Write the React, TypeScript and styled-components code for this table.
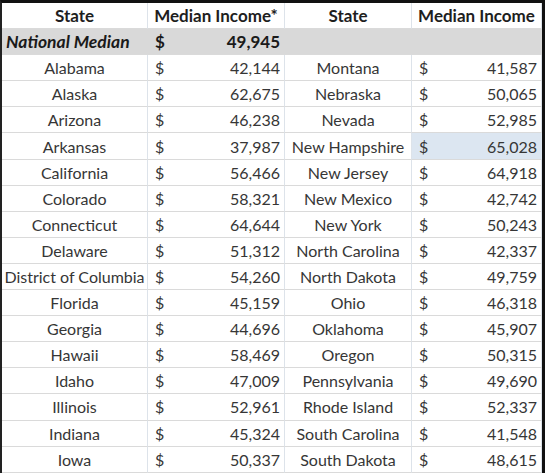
import React from "react";
import styled, { createGlobalStyle } from "styled-components";

const Global = createGlobalStyle`
  html, body { margin: 0; padding: 0; background: #ffffff; }
  body { font-family: Lato, "Open Sans", "Liberation Sans", sans-serif; }
`;

const Sheet = styled.div`
  width: 540px;
  border-top: 3px solid #111;
  border-left: 2px solid #222;
  border-right: 3px solid #111;
  display: grid;
  grid-template-columns: 146px 137px 127px 130px;
  grid-auto-rows: 26.1px;
  background: #fff;
`;

const Cell = styled.div<{ $fill?: string; $align?: "center" | "left" }>`
  box-sizing: border-box;
  border-bottom: 1px solid #dadada;
  border-right: 1px solid ${(p) => (p.$fill ? p.$fill : "#dde3ea")};
  background: ${(p) => p.$fill ?? "transparent"};
  display: flex;
  align-items: center;
  justify-content: ${(p) => (p.$align === "left" ? "flex-start" : "center")};
  font-size: 16px;
  color: #363636;
  white-space: nowrap;
  overflow: hidden;
`;

const HeaderCell = styled(Cell)`
  font-weight: 700;
  color: #1e1e1e;
  font-size: 17px;
`;

const NationalLabel = styled(Cell)`
  font-weight: 700;
  font-style: italic;
  color: #1a1a1a;
  font-size: 17.5px;
  padding-left: 4px;
`;

const Money = styled(Cell)<{ $bold?: boolean }>`
  justify-content: space-between;
  padding: 0 4px 0 7px;
  font-weight: ${(p) => (p.$bold ? 700 : 400)};
  color: ${(p) => (p.$bold ? "#1a1a1a" : "#363636")};
  font-size: ${(p) => (p.$bold ? "17px" : "16px")};
`;

type Row = [string, string, string, string];

const rows: Row[] = [
  ["Alabama", "42,144", "Montana", "41,587"],
  ["Alaska", "62,675", "Nebraska", "50,065"],
  ["Arizona", "46,238", "Nevada", "52,985"],
  ["Arkansas", "37,987", "New Hampshire", "65,028"],
  ["California", "56,466", "New Jersey", "64,918"],
  ["Colorado", "58,321", "New Mexico", "42,742"],
  ["Connecticut", "64,644", "New York", "50,243"],
  ["Delaware", "51,312", "North Carolina", "42,337"],
  ["District of Columbia", "54,260", "North Dakota", "49,759"],
  ["Florida", "45,159", "Ohio", "46,318"],
  ["Georgia", "44,696", "Oklahoma", "45,907"],
  ["Hawaii", "58,469", "Oregon", "50,315"],
  ["Idaho", "47,009", "Pennsylvania", "49,690"],
  ["Illinois", "52,961", "Rhode Island", "52,337"],
  ["Indiana", "45,324", "South Carolina", "41,548"],
  ["Iowa", "50,337", "South Dakota", "48,615"],
];

const GRAY = "#d9d9d9";
const SELECTED = "#dce6f1";

export default function App() {
  return (
    <>
      <Global />
      <Sheet>
        <HeaderCell>State</HeaderCell>
        <HeaderCell>Median Income*</HeaderCell>
        <HeaderCell>State</HeaderCell>
        <HeaderCell>Median Income</HeaderCell>

        <NationalLabel $fill={GRAY} $align="left">National Median</NationalLabel>
        <Money $fill={GRAY} $bold>
          <span>$</span>
          <span>49,945</span>
        </Money>
        <Cell $fill={GRAY} />
        <Cell $fill={GRAY} />

        {rows.map(([s1, v1, s2, v2]) => (
          <React.Fragment key={s1}>
            <Cell>{s1}</Cell>
            <Money>
              <span>$</span>
              <span>{v1}</span>
            </Money>
            <Cell>{s2}</Cell>
            <Money $fill={s2 === "New Hampshire" ? SELECTED : undefined}>
              <span>$</span>
              <span>{v2}</span>
            </Money>
          </React.Fragment>
        ))}
      </Sheet>
    </>
  );
}
